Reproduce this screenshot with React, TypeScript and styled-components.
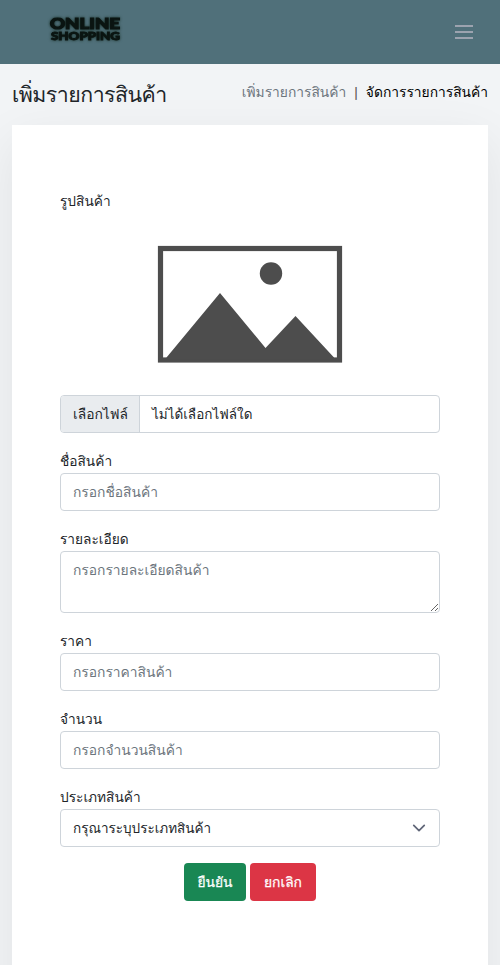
import React from "react";
import styled, { createGlobalStyle } from "styled-components";

const GlobalStyle = createGlobalStyle`
  *, *::before, *::after { box-sizing: border-box; }
  body {
    margin: 0;
    background: #f2f4f6;
    color: #212529;
    font-family: Loma, "Liberation Sans", sans-serif;
    font-size: 13.8px;
    line-height: 24px;
  }
`;

const Page = styled.div`
  height: 965px;
  overflow: hidden;
`;

const Navbar = styled.header`
  display: flex;
  align-items: center;
  justify-content: space-between;
  height: 64px;
  padding: 0 27px 0 49px;
  background: #50707a;
`;

const Logo = styled.svg`
  display: block;
  width: 76px;
  height: 32px;
  margin-top: -6px;
  overflow: visible;
  filter: blur(0.35px) drop-shadow(0 0 1.5px #183028);
`;

const MenuButton = styled.button`
  display: grid;
  gap: 4px;
  padding: 0;
  border: 0;
  background: none;
`;

const MenuBar = styled.span`
  width: 18px;
  height: 2px;
  background: #9ca3af;
`;

const Heading = styled.div`
  display: flex;
  justify-content: space-between;
  height: 61px;
  padding: 15px 12px 0;
`;

const Title = styled.h1`
  margin: 0;
  font-size: 21.3px;
  font-weight: 400;
  letter-spacing: -0.5px;
  line-height: 32px;
  white-space: nowrap;
`;

const Crumbs = styled.nav`
  display: flex;
  gap: 8px;
  line-height: 26px;
  white-space: nowrap;
`;

const Crumb = styled.a<{ $muted?: boolean }>`
  color: ${(p) => (p.$muted ? "#6c757d" : "#000")};
`;

const Divider = styled.span`
  color: #5f5a58;
`;

const Card = styled.main`
  height: 900px;
  margin: 0 12px;
  padding: 64px 48px;
  background: #fff;
  box-shadow: 0 16px 48px rgba(0, 0, 0, 0.075);
`;

const Field = styled.div`
  margin-bottom: 16px;
`;

const Label = styled.label`
  display: block;
  height: 24px;
  font-size: 13.7px;
  white-space: nowrap;
`;

const Preview = styled.svg`
  display: block;
  width: 186px;
  height: 119px;
  margin: 32px auto 31px;
`;

const Control = styled.div`
  display: flex;
  align-items: center;
  height: 38px;
  border: 1px solid #ced4da;
  border-radius: 4px;
  overflow: hidden;
`;

const FileButton = styled.span`
  flex: none;
  width: 79px;
  height: 36px;
  padding-left: 12px;
  border-right: 1px solid #ced4da;
  background: #e9ecef;
  line-height: 36px;
  white-space: nowrap;
`;

const FileName = styled.span`
  padding-left: 12px;
  font-size: 13.5px;
  white-space: nowrap;
`;

const Input = styled.input`
  display: block;
  width: 100%;
  height: 38px;
  padding: 6px 12px;
  border: 1px solid #ced4da;
  border-radius: 4px;
  background: #fff;
  color: #212529;
  font: inherit;
  &::placeholder { color: #6c757d; opacity: 1; }
`;

const TextArea = styled(Input).attrs({ as: "textarea" })`
  height: 62px;
  resize: vertical;
`;

const SelectBox = styled(Control)`
  justify-content: space-between;
  padding: 0 13px 0 12px;
  font-size: 13.5px;
`;

const Actions = styled.div`
  display: flex;
  justify-content: center;
  gap: 4px;
`;

const Button = styled.button<{ $color: string; $width: number }>`
  width: ${(p) => p.$width}px;
  height: 38px;
  padding: 0;
  border: 0;
  border-radius: 4px;
  background: ${(p) => p.$color};
  color: #fff;
  font: inherit;
  -webkit-text-stroke: 0.25px #fff;
`;

export default function App() {
  return (
    <Page>
      <GlobalStyle />
      <Navbar>
        <Logo viewBox="0 0 76 32" aria-label="Online Shopping">
          <g fill="#0b1512" stroke="#0b1512" fontFamily="Lato, sans-serif" fontWeight="900">
            <text x="1" y="16.2" fontSize="15" strokeWidth="1.2" textLength="70" lengthAdjust="spacingAndGlyphs">ONLINE</text>
            <text x="2" y="27" fontSize="10.8" strokeWidth="0.9" textLength="69" lengthAdjust="spacingAndGlyphs">SHOPPING</text>
          </g>
        </Logo>
        <MenuButton aria-label="เมนู">
          <MenuBar /><MenuBar /><MenuBar />
        </MenuButton>
      </Navbar>
      <Heading>
        <Title>เพิ่มรายการสินค้า</Title>
        <Crumbs>
          <Crumb $muted>เพิ่มรายการสินค้า</Crumb>
          <Divider>|</Divider>
          <Crumb>จัดการรายการสินค้า</Crumb>
        </Crumbs>
      </Heading>
      <Card>
        <Field>
          <Label>รูปสินค้า</Label>
          <Preview viewBox="0 0 186 119">
            <rect x="3.5" y="3.5" width="179" height="111.5" fill="#fff" stroke="#4d4d4d" strokeWidth="5.2" />
            <circle cx="114" cy="28.5" r="11.2" fill="#4d4d4d" />
            <path d="M9.5 112.5L63 48l45.5 55 30-32 38.5 41.5v2H9.5z" fill="#4d4d4d" />
          </Preview>
          <Control>
            <FileButton>เลือกไฟล์</FileButton>
            <FileName>ไม่ได้เลือกไฟล์ใด</FileName>
          </Control>
        </Field>
        <Field>
          <Label>ชื่อสินค้า</Label>
          <Input placeholder="กรอกชื่อสินค้า" />
        </Field>
        <Field>
          <Label>รายละเอียด</Label>
          <TextArea placeholder="กรอกรายละเอียดสินค้า" />
        </Field>
        <Field>
          <Label>ราคา</Label>
          <Input placeholder="กรอกราคาสินค้า" />
        </Field>
        <Field>
          <Label>จำนวน</Label>
          <Input placeholder="กรอกจำนวนสินค้า" />
        </Field>
        <Field>
          <Label>ประเภทสินค้า</Label>
          <SelectBox>
            <span>กรุณาระบุประเภทสินค้า</span>
            <svg width="14" height="14" viewBox="0 0 16 16" fill="none" stroke="#606678" strokeWidth="2" strokeLinecap="round" strokeLinejoin="round">
              <path d="M2 5l6 6 6-6" />
            </svg>
          </SelectBox>
        </Field>
        <Actions>
          <Button $color="#198754" $width={62}>ยืนยัน</Button>
          <Button $color="#dc3545" $width={66}>ยกเลิก</Button>
        </Actions>
      </Card>
    </Page>
  );
}
